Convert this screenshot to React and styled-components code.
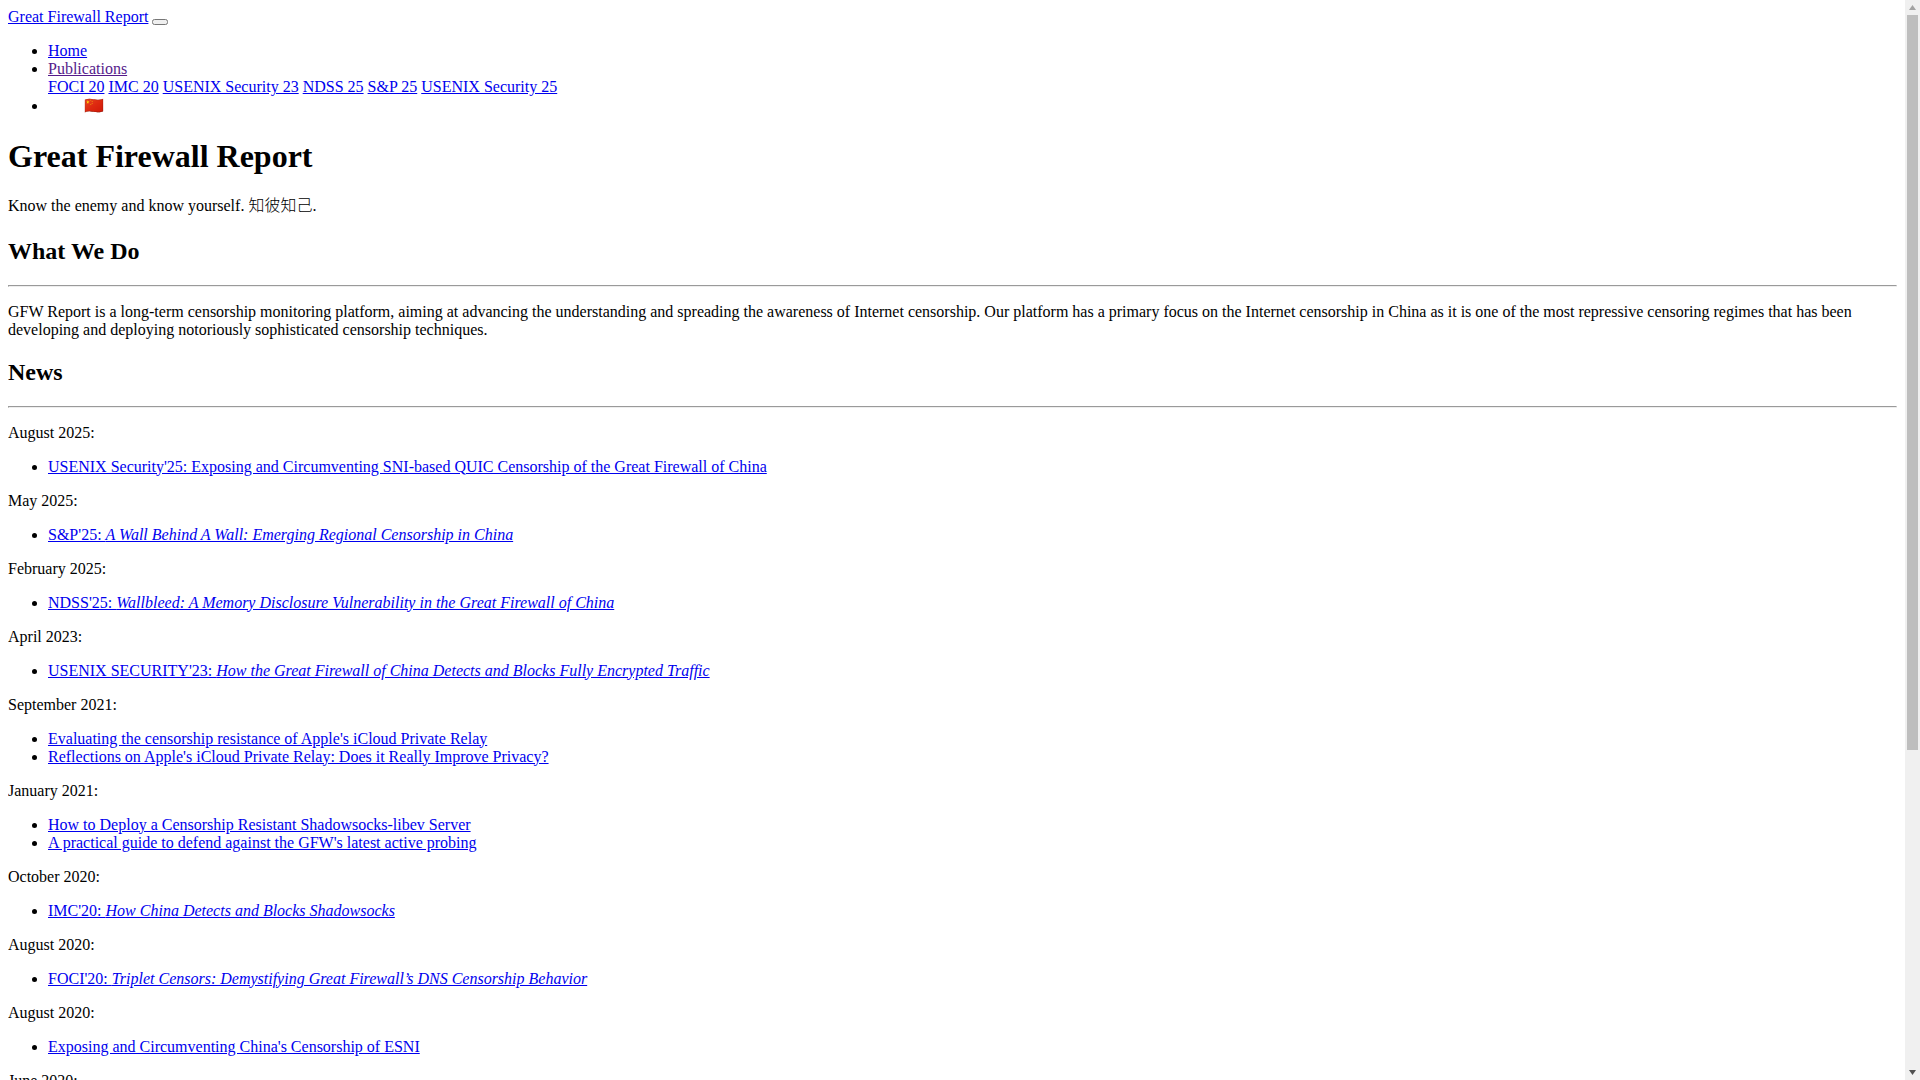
import React from "react";
import styled, { createGlobalStyle } from "styled-components";

const GlobalStyle = createGlobalStyle`
    body {
        margin-right: 23px;
        font-family: "Liberation Serif", "Noto Sans CJK SC", serif;
    }
`;

const Brand = styled.a`
    color: #0000ee;
`;

const Toggler = styled.button``;

const PlainLink = styled.a`
    color: ${(props) => (props.$visited ? "#551a8b" : "#0000ee")};
`;

const Flag = styled.span`
    display: inline-block;
    margin-left: 36px;
    padding-bottom: 2px;
`;

const Tagline = styled.p`
    padding-bottom: 3px;
`;

// keeps the taller CJK metrics from pushing the line down
const Cjk = styled.span`
    font-family: "Noto Sans CJK SC", sans-serif;
    font-weight: 300;
    line-height: 0;
`;

const Rule = styled.hr``;

const Scrollbar = styled.div`
    position: fixed;
    top: 0;
    right: 0;
    bottom: 0;
    width: 15px;
    display: flex;
    flex-direction: column;
    justify-content: space-between;
    background: #f0f0f0;
`;

const ScrollTrack = styled.div`
    display: flex;
    flex-direction: column;
    align-items: center;
`;

const ScrollArrow = styled.svg`
    display: block;
    width: 15px;
    height: 15px;
    fill: ${(props) => props.$color};
`;

const ScrollThumb = styled.div`
    width: 11px;
    height: 735px;
    background: #bebebe;
`;

const nav = ["FOCI 20", "IMC 20", "USENIX Security 23", "NDSS 25", "S&P 25", "USENIX Security 25"];

// title is the plain prefix, em is the italic part of the paper name
const news = [
    ["August 2025:", [["USENIX Security'25: Exposing and Circumventing SNI-based QUIC Censorship of the Great Firewall of China"]]],
    ["May 2025:", [["S&P'25: ", "A Wall Behind A Wall: Emerging Regional Censorship in China"]]],
    ["February 2025:", [["NDSS'25: ", "Wallbleed: A Memory Disclosure Vulnerability in the Great Firewall of China"]]],
    ["April 2023:", [["USENIX SECURITY'23: ", "How the Great Firewall of China Detects and Blocks Fully Encrypted Traffic"]]],
    ["September 2021:", [
        ["Evaluating the censorship resistance of Apple's iCloud Private Relay"],
        ["Reflections on Apple's iCloud Private Relay: Does it Really Improve Privacy?"],
    ]],
    ["January 2021:", [
        ["How to Deploy a Censorship Resistant Shadowsocks-libev Server"],
        ["A practical guide to defend against the GFW's latest active probing"],
    ]],
    ["October 2020:", [["IMC'20: ", "How China Detects and Blocks Shadowsocks"]]],
    ["August 2020:", [["FOCI'20: ", "Triplet Censors: Demystifying Great Firewall’s DNS Censorship Behavior"]]],
    ["August 2020:", [["Exposing and Circumventing China's Censorship of ESNI"]]],
    ["June 2020:", []],
];

const App = () => {
    return (
        <>
            <GlobalStyle />
            <nav>
                <Brand href="#">Great Firewall Report</Brand> <Toggler />
                <ul>
                    <li>
                        <PlainLink href="#">Home</PlainLink>
                    </li>
                    <li>
                        <PlainLink href="#" $visited>
                            Publications
                        </PlainLink>
                        <div>
                            {nav.map((item) => (
                                <React.Fragment key={item}>
                                    <PlainLink href="#">{item}</PlainLink>{" "}
                                </React.Fragment>
                            ))}
                        </div>
                    </li>
                    <li>
                        <Flag>🇨🇳</Flag>
                    </li>
                </ul>
            </nav>
            <main>
                <h1>Great Firewall Report</h1>
                <Tagline>
                    Know the enemy and know yourself. <Cjk>知彼知己</Cjk>.
                </Tagline>
                <h2>What We Do</h2>
                <Rule />
                <p>
                    GFW Report is a long-term censorship monitoring platform, aiming at advancing the understanding and
                    spreading the awareness of Internet censorship. Our platform has a primary focus on the Internet
                    censorship in China as it is one of the most repressive censoring regimes that has been developing
                    and deploying notoriously sophisticated censorship techniques.
                </p>
                <h2>News</h2>
                <Rule />
                {news.map(([month, items], i) => (
                    <React.Fragment key={i}>
                        <p>{month}</p>
                        <ul>
                            {items.map(([title, em]) => (
                                <li key={title}>
                                    <PlainLink href="#">
                                        {title}
                                        {em && <em>{em}</em>}
                                    </PlainLink>
                                </li>
                            ))}
                        </ul>
                    </React.Fragment>
                ))}
            </main>
            <Scrollbar>
                <ScrollTrack>
                    <ScrollArrow viewBox="0 0 15 15" $color="#a3a3a3">
                        <path d="M7.5 5 L11 10 L4 10 Z" />
                    </ScrollArrow>
                    <ScrollThumb />
                </ScrollTrack>
                <ScrollArrow viewBox="0 0 15 15" $color="#505050">
                    <path d="M4 5 L11 5 L7.5 10 Z" />
                </ScrollArrow>
            </Scrollbar>
        </>
    );
};

export default App;
